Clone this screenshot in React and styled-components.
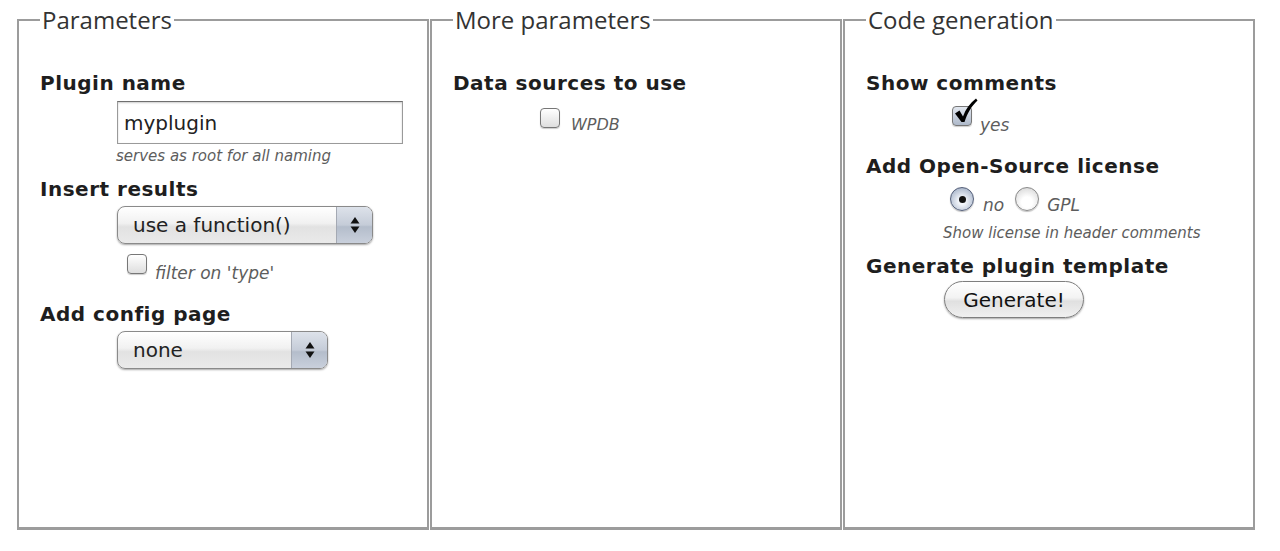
import React from "react";
import styled, { createGlobalStyle } from "styled-components";

const GlobalStyle = createGlobalStyle`
  html, body {
    margin: 0;
    padding: 0;
    background: #ffffff;
  }
  body {
    font-family: "DejaVu Sans", Verdana, sans-serif;
    color: #222;
  }
`;

const Page = styled.div`
  display: flex;
  gap: 1px;
  padding: 6px 0 0 17px;
  height: 551px;
  box-sizing: border-box;
`;

const Fieldset = styled.fieldset`
  box-sizing: border-box;
  width: 412px;
  height: 524px;
  margin: 0;
  padding: 37px 0 0 21px;
  min-width: 0;
  border: 2px solid #9c9c9c;
  border-bottom-width: 3px;
`;

const Legend = styled.legend`
  font-family: "Open Sans", "Trebuchet MS", sans-serif;
  font-size: 24px;
  line-height: 28px;
  color: #333;
  padding: 0 2px;
`;

const Label = styled.div`
  font-weight: bold;
  font-size: 20px;
  line-height: 24px;
  letter-spacing: 0.5px;
  color: #1e1e1e;
  margin-top: ${({ $top }) => $top || 0}px;
`;

const Row = styled.div`
  display: flex;
  align-items: flex-start;
  margin-left: ${({ $indent }) => $indent || 0}px;
  margin-top: ${({ $top }) => $top || 0}px;
`;

const TextInput = styled.input`
  box-sizing: border-box;
  width: 286px;
  height: 43px;
  padding: 0 6px;
  font-family: "DejaVu Sans", Verdana, sans-serif;
  font-size: 20px;
  color: #222;
  border: 1px solid #9a9a9a;
  border-top-color: #6f6f6f;
  box-shadow: inset 0 1px 2px rgba(0, 0, 0, 0.2);
  outline: none;
`;

const Hint = styled.div`
  font-style: italic;
  font-size: 15px;
  line-height: 16px;
  color: #5d5d5d;
  margin-left: ${({ $indent }) => $indent || 0}px;
  margin-top: ${({ $top }) => $top || 0}px;
`;

const SelectBox = styled.div`
  box-sizing: border-box;
  display: flex;
  width: ${({ $width }) => $width}px;
  height: 38px;
  border: 1px solid #8a8a8a;
  border-radius: 8px;
  overflow: hidden;
  background: linear-gradient(#ffffff, #f1f1f1 45%, #e2e2e2 55%, #eaeaea);
  box-shadow: 0 1px 2px rgba(0, 0, 0, 0.35);
  font-size: 20px;
  color: #222;
`;

const SelectValue = styled.div`
  flex: 1;
  display: flex;
  align-items: center;
  padding-left: 15px;
`;

const SelectArrows = styled.div`
  width: 35px;
  border-left: 1px solid #a4a9b3;
  background: linear-gradient(#dde2ea, #c5ccd8 50%, #b4bdcb 55%, #c9d0dc);
  display: flex;
  align-items: center;
  justify-content: center;
`;

const CheckBox = styled.span`
  position: relative;
  box-sizing: border-box;
  flex: none;
  width: 20px;
  height: 20px;
  border: 1.5px solid #777;
  border-radius: 4px;
  background: ${({ $checked }) =>
    $checked
      ? "linear-gradient(#e2e7ef, #aeb9ca)"
      : "linear-gradient(#ffffff, #dedede)"};
  box-shadow: 0 1px 1px rgba(0, 0, 0, 0.2);
`;

const Check = styled.svg`
  position: absolute;
  left: 0;
  top: -9px;
`;

const Radio = styled.span`
  position: relative;
  box-sizing: border-box;
  flex: none;
  width: 24px;
  height: 24px;
  margin-left: ${({ $gap }) => $gap || 0}px;
  border-radius: 50%;
  border: 1.5px solid ${({ $checked }) => ($checked ? "#55607a" : "#8a8a8a")};
  background: ${({ $checked }) =>
    $checked
      ? "radial-gradient(circle at 50% 60%, #f3f6fb 20%, #b5c0d2 70%, #7d889c)"
      : "radial-gradient(circle at 50% 65%, #ffffff 30%, #e3e3e3 70%, #c8c8c8)"};
  box-shadow: 0 1px 1px rgba(0, 0, 0, 0.25);

  &::after {
    content: "";
    display: ${({ $checked }) => ($checked ? "block" : "none")};
    position: absolute;
    left: 50%;
    top: 50%;
    width: 7px;
    height: 7px;
    margin: -3.5px 0 0 -3.5px;
    border-radius: 50%;
    background: #111;
  }
`;

const OptionText = styled.span`
  font-style: italic;
  font-size: ${({ $size }) => $size || 17}px;
  color: #5d5d5d;
  margin: ${({ $drop }) => $drop || 6}px 0 0 ${({ $gap }) => $gap || 8}px;
  line-height: 20px;
`;

const Button = styled.button`
  box-sizing: border-box;
  width: 140px;
  height: 37px;
  border: 1px solid #7e7e7e;
  border-radius: 19px;
  background: linear-gradient(#ffffff, #f3f3f3 45%, #e0e0e0 55%, #f0f0f0);
  box-shadow: 0 1px 2px rgba(0, 0, 0, 0.35);
  font-family: "DejaVu Sans", Verdana, sans-serif;
  font-size: 20px;
  color: #111;
  padding: 0;
`;

const Arrows = () => (
  <svg width="12" height="20" viewBox="0 0 12 20">
    <path d="M6 2 L10.5 8.5 L1.5 8.5 Z" fill="#111" />
    <path d="M6 18 L10.5 11.5 L1.5 11.5 Z" fill="#111" />
  </svg>
);

const Select = ({ width, value }) => (
  <SelectBox $width={width}>
    <SelectValue>{value}</SelectValue>
    <SelectArrows>
      <Arrows />
    </SelectArrows>
  </SelectBox>
);

const App = () => (
  <>
    <GlobalStyle />
    <Page>
      <Fieldset>
        <Legend>Parameters</Legend>
        <Label>Plugin name</Label>
        <Row $indent={77} $top={6}>
          <TextInput defaultValue="myplugin" readOnly />
        </Row>
        <Hint $indent={76} $top={4}>
          serves as root for all naming
        </Hint>
        <Label $top={13}>Insert results</Label>
        <Row $indent={77} $top={5}>
          <Select width={256} value="use a function()" />
        </Row>
        <Row $indent={87} $top={10}>
          <CheckBox />
          <OptionText $drop={9}>filter on 'type'</OptionText>
        </Row>
        <Label $top={19}>Add config page</Label>
        <Row $indent={77} $top={5}>
          <Select width={211} value="none" />
        </Row>
      </Fieldset>

      <Fieldset>
        <Legend>More parameters</Legend>
        <Label>Data sources to use</Label>
        <Row $indent={87} $top={13}>
          <CheckBox />
          <OptionText $size={16} $drop={7} $gap={11}>WPDB</OptionText>
        </Row>
      </Fieldset>

      <Fieldset>
        <Legend>Code generation</Legend>
        <Label>Show comments</Label>
        <Row $indent={86} $top={11}>
          <CheckBox $checked>
            <Check width="26" height="28" viewBox="0 0 26 28">
              <path
                d="M2 15.5 L6.5 12.5 L10 18.5 C12.5 11 17 5 23 0.5 L24.5 2.5 C18.5 8 14.5 15 11.5 24 L8.5 24 Z"
                fill="#000"
              />
            </Check>
          </CheckBox>
          <OptionText $drop={9}>yes</OptionText>
        </Row>
        <Label $top={19}>Add Open-Source license</Label>
        <Row $indent={84} $top={9}>
          <Radio $checked />
          <OptionText $drop={8} $gap={9}>no</OptionText>
          <Radio $gap={11} />
          <OptionText $drop={8} $gap={8}>GPL</OptionText>
        </Row>
        <Hint $indent={77} $top={10}>
          Show license in header comments
        </Hint>
        <Label $top={13}>Generate plugin template</Label>
        <Row $indent={78} $top={3}>
          <Button>Generate!</Button>
        </Row>
      </Fieldset>
    </Page>
  </>
);

export default App;
